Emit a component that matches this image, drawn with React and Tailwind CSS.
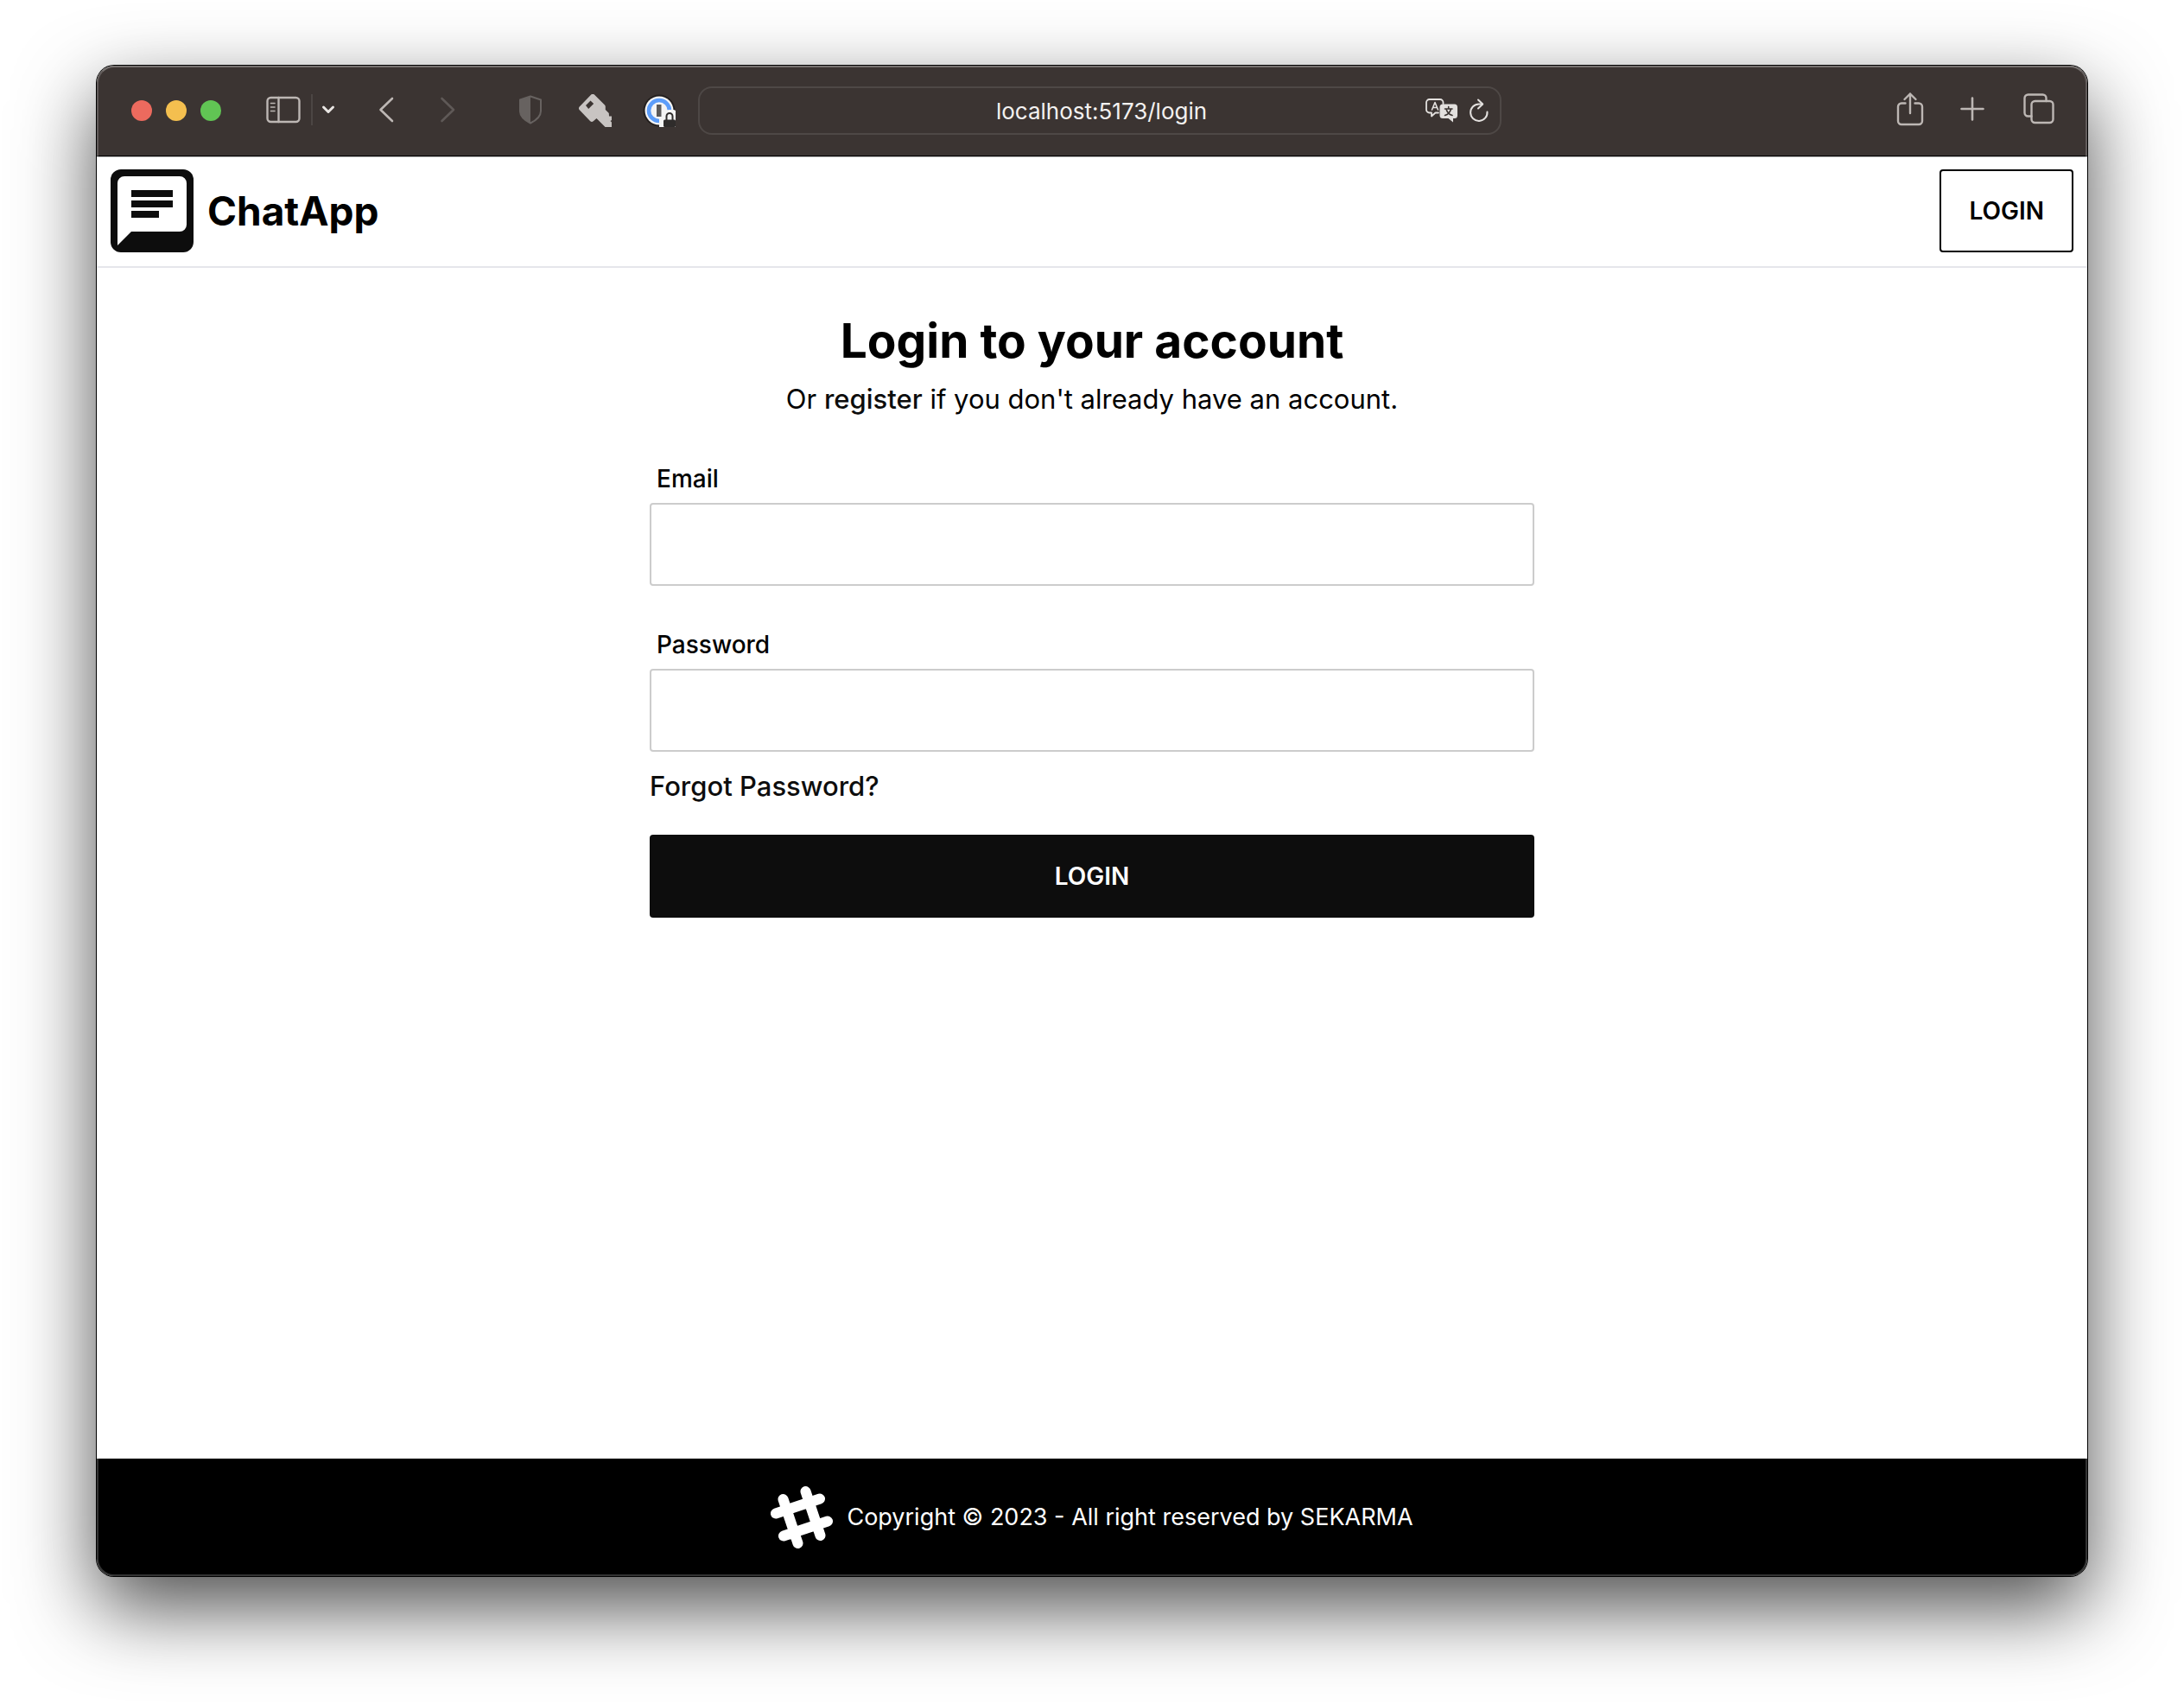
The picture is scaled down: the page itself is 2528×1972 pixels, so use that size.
const stroke = { fill: "none", strokeLinecap: "round", strokeLinejoin: "round" };

function SidebarIcon() {
  return (
    <svg width="40" height="32" viewBox="0 0 40 32" stroke="#bdb7b4" strokeWidth="2.4" {...stroke}>
      <rect x="1.5" y="2" width="37" height="28" rx="4" />
      <path d="M14.500 2v28" />
      <path d="M5.5 8.5h4.5M5.5 13h4.5M5.5 17.5h4.5" strokeWidth="1.6" />
    </svg>
  );
}

function ShieldIcon() {
  return (
    <svg width="28" height="34" viewBox="0 0 28 34" {...stroke}>
      <path d="M14 1.5 26 5.5v13c0 6-5 10.500-12 14C7 29 2 24.500 2 18.500v-13z" stroke="#676260" strokeWidth="2" />
      <path d="M14 1.500v31C7 29 1.500 24.500 1.500 18.500v-13z" fill="#676260" />
    </svg>
  );
}

function KeyIcon() {
  return (
    <svg width="38" height="38" viewBox="0 0 38 38">
      <path
        fill="#c8c4c2"
        fillRule="evenodd"
        d="M14 .8a3 3 0 0 1 4.200 0L30 12.500a3 3 0 0 1 .8 2.500v3l4 4 .2 3.500h3V30l-1.500 1 1.500 1.500V38h-7.500L20.500 28l-3.500 3a3 3 0 0 1-4 0L1 18.500a3 3 0 0 1 0-4.200zM13.500 7.500l-5.500 5.500 3.200 4 6-6z"
      />
    </svg>
  );
}

function PasswordManagerIcon() {
  return (
    <svg width="38" height="38" viewBox="0 0 38 38">
      <circle cx="19" cy="19" r="18.500" fill="#231f1e" />
      <circle cx="19" cy="19" r="16.500" fill="#f4f4f4" />
      <circle cx="19" cy="19" r="12" fill="none" stroke="#5c9dfa" strokeWidth="4.600" />
      <rect x="16" y="12" width="5.500" height="14" fill="#5c5a5a" />
      <path d="M38 19v19H19V27h3.500v-2a8 8 0 0 1 8-7H36z" fill="#f4f4f4" />
      <rect x="24" y="29.500" width="14" height="8.500" rx="1.500" fill="#2f2c2b" />
      <path d="M27.500 30v-4.500a3.500 3.500 0 0 1 7 0V30" fill="none" stroke="#2f2c2b" strokeWidth="2" />
    </svg>
  );
}

function TranslateIcon() {
  return (
    <svg width="38" height="28" viewBox="0 0 38 28" {...stroke}>
      <path
        d="M15 16.500h-3.500L7 20.500v-4H4.500A3.500 3.500 0 0 1 1 13V4.500A3.500 3.500 0 0 1 4.500 1H17a3.500 3.500 0 0 1 3.500 3.500V6"
        stroke="#e3e0de"
        strokeWidth="1.800"
      />
      <path d="M7.500 13 11 4.500 14.500 13M8.800 10.500h4.500" stroke="#e3e0de" strokeWidth="1.600" />
      <path
        d="M20 6.500h13.500A3.500 3.500 0 0 1 37 10v9.500a3.500 3.500 0 0 1-3.500 3.500H32v4.500L26.500 23H20a3.500 3.500 0 0 1-3.500-3.500V10A3.500 3.500 0 0 1 20 6.500z"
        fill="#e3e0de"
      />
      <path d="M22.500 12h8.500M26.700 9.500V12M29.500 12c-.8 3.500-3.500 6.500-7 7.500M24 12c.8 3.500 3.500 6.500 7 7.500" stroke="#3b3432" strokeWidth="1.600" />
    </svg>
  );
}

function ReloadIcon() {
  return (
    <svg width="24" height="28" viewBox="0 0 24 28" stroke="#e3e0de" strokeWidth="2" {...stroke}>
      <path d="M21.500 15.500A9.700 9.700 0 1 1 12 6.500h4" />
      <path d="m11 1.500 5.200 5-5.200 5" />
    </svg>
  );
}

function ShareIcon() {
  return (
    <svg width="32" height="40" viewBox="0 0 32 40" stroke="#bdb7b4" strokeWidth="2.400" {...stroke}>
      <path d="M10.500 13.500H6A4 4 0 0 0 2 17.500V34a4 4 0 0 0 4 4h20a4 4 0 0 0 4-4V17.500a4 4 0 0 0-4-4h-4.500" />
      <path d="M16 25V2.500M9.500 9 16 2.500 22.500 9" />
    </svg>
  );
}

function TabsIcon() {
  return (
    <svg width="36" height="36" viewBox="0 0 36 36" stroke="#bdb7b4" strokeWidth="2.400" {...stroke}>
      <rect x="9.500" y="9" width="25" height="25" rx="4" />
      <path d="M26.500 9V5.500a4 4 0 0 0-4-4h-17a4 4 0 0 0-4 4v17a4 4 0 0 0 4 4h4" />
    </svg>
  );
}

function ChatLogo() {
  return (
    <svg width="96" height="96" viewBox="0 0 96 96">
      <rect width="96" height="96" rx="12" fill="#0d0d0d" />
      <path d="M16 8h64a8 8 0 0 1 8 8v48a8 8 0 0 1-8 8H24L8 88V16a8 8 0 0 1 8-8z" fill="#fff" />
      <path d="M24 24h48v8H24zM24 36h48v8H24zM24 48h32v8H24z" fill="#0d0d0d" />
    </svg>
  );
}

function HashLogo() {
  return (
    <svg width="72" height="72" viewBox="0 0 72 72" stroke="#fff" strokeWidth="12" strokeLinecap="round">
      <path d="M6 31.500 57 14.500M15 57.500 66 40.500M14.500 15 31.500 66M40.500 6 57.500 57" />
    </svg>
  );
}

function Field({ id, label, type }) {
  return (
    <div className="flex flex-col">
      <label htmlFor={id} className="px-2 py-2 text-[28px] leading-10 font-medium">
        {label}
      </label>
      <input id={id} type={type} className="h-24 w-full rounded border-2 border-[#cccccc] bg-white px-8 text-[28px]" />
    </div>
  );
}

function Toolbar() {
  return (
    <div className="flex h-[105px] items-center border-b border-black bg-[#3b3432] pr-[38px] pl-10">
      <div className="flex gap-4">
        <span className="size-6 rounded-full bg-[#ec6a5e]" />
        <span className="size-6 rounded-full bg-[#f4bf4f]" />
        <span className="size-6 rounded-full bg-[#61c554]" />
      </div>
      <div className="ml-[52px] flex items-center pb-0.5">
        <button aria-label="Show sidebar"><SidebarIcon /></button>
        <span className="ml-3 h-9 w-0.5 bg-[#4c4644]" />
        <button aria-label="Sidebar options" className="ml-2.5">
          <svg width="16" height="12" viewBox="0 0 16 12" stroke="#e9e5e3" strokeWidth="3" {...stroke}><path d="m2.500 3 5.500 5.500L13.500 3" /></svg>
        </button>
        <button aria-label="Back" className="ml-[49px]">
          <svg width="20" height="30" viewBox="0 0 20 30" stroke="#bdb7b4" strokeWidth="2.600" {...stroke}><path d="M17 2 3.500 15 17 28" /></svg>
        </button>
        <button aria-label="Forward" className="ml-[51px]">
          <svg width="20" height="30" viewBox="0 0 20 30" stroke="#5f5957" strokeWidth="2.600" {...stroke}><path d="M3.500 2 17 15 3.500 28" /></svg>
        </button>
        <button aria-label="Privacy report" className="ml-[72px]"><ShieldIcon /></button>
      </div>
      <button aria-label="Passwords" className="ml-[42px]"><KeyIcon /></button>
      <button aria-label="Password manager" className="ml-9"><PasswordManagerIcon /></button>
      <div className="ml-[26px] flex h-14 w-[930px] items-center rounded-2xl border-2 border-[#4e4846] pr-3">
        <input
          aria-label="Address"
          defaultValue="localhost:5173/login"
          className="min-w-0 flex-1 bg-transparent pl-[90px] text-center text-[26px] text-[#f3f1f0]"
        />
        <button aria-label="Translate"><TranslateIcon /></button>
        <button aria-label="Reload" className="ml-3"><ReloadIcon /></button>
      </div>
      <div className="ml-auto flex items-center pb-1">
        <button aria-label="Share"><ShareIcon /></button>
        <button aria-label="New tab" className="ml-[42px]">
          <svg width="28" height="28" viewBox="0 0 28 28" stroke="#bdb7b4" strokeWidth="2.600" {...stroke}><path d="M14 1.500v25M1.500 14h25" /></svg>
        </button>
        <button aria-label="Tab overview" className="ml-[45px]"><TabsIcon /></button>
      </div>
    </div>
  );
}

export default function App() {
  return (
    <div className="flex min-h-screen flex-col bg-white px-28 pt-[76px] pb-[148px] font-['Inter',sans-serif] text-black">
      <div className="relative flex flex-1 flex-col overflow-hidden rounded-[20px] bg-white shadow-[0_0_0_1px_#000,0_36px_92px_rgba(0,0,0,0.7)]">
        <Toolbar />
        <header className="flex items-center justify-between border-t border-b-2 border-t-[#b4b4b4] border-b-[#e5e6eb] px-4 pt-3.5 pb-4">
          <a href="#home" className="flex items-center gap-4">
            <ChatLogo />
            <span className="text-[46px] font-bold">ChatApp</span>
          </a>
          <button className="h-24 rounded border-2 border-black px-8 text-[28px] font-semibold">LOGIN</button>
        </header>
        <main className="mx-auto flex w-full max-w-5xl flex-1 flex-col pt-12">
          <h1 className="text-center text-[55px] leading-[72px] font-bold">Login to your account</h1>
          <p className="mt-2 text-center text-[31px] leading-[48px]">
            Or <a href="#register" className="font-medium text-[#0d0d0d]">register</a> if you don't already have an account.
          </p>
          <form className="mt-10 flex flex-col" onSubmit={(e) => e.preventDefault()}>
            <div className="flex flex-col gap-10">
              <Field id="email" label="Email" type="email" />
              <Field id="password" label="Password" type="password" />
            </div>
            <a href="#forgot" className="mt-4 self-start text-[31px] leading-[48px] font-medium text-[#0d0d0d]">Forgot Password?</a>
            <button type="submit" className="mt-8 h-24 rounded bg-[#0d0d0d] text-[28px] font-semibold text-white">LOGIN</button>
          </form>
        </main>
        <footer className="flex h-[136px] items-center justify-center gap-4 bg-black text-[27px] text-white">
          <HashLogo />
          <p>Copyright © 2023 - All right reserved by SEKARMA</p>
        </footer>
        <div className="pointer-events-none absolute inset-0 rounded-[20px] border-2 border-white/20 border-t-white/30" />
      </div>
    </div>
  );
}
